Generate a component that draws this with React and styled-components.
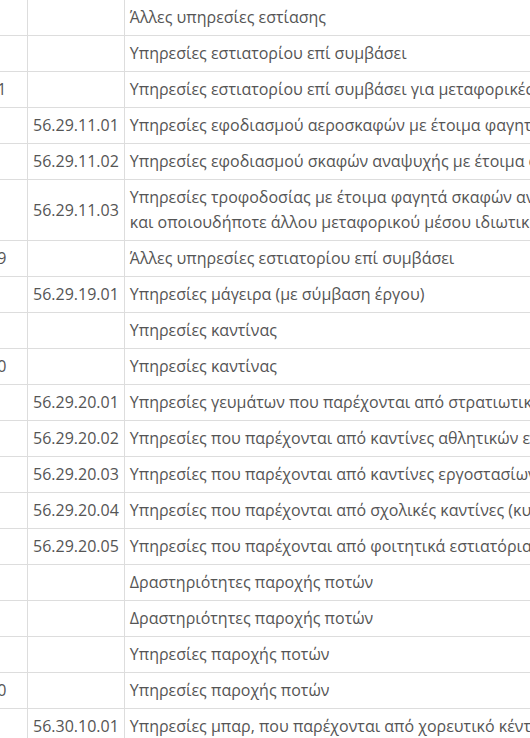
import React from "react";
import styled, { createGlobalStyle } from "styled-components";

const GlobalStyle = createGlobalStyle`
  html, body {
    margin: 0;
    padding: 0;
    background: #fff;
    overflow: hidden;
  }
  body {
    font-family: "Open Sans", "Noto Sans", sans-serif;
  }
`;

// table is scrolled: first column sits partly off-screen to the left
const Viewport = styled.div`
  width: 530px;
  height: 738px;
  overflow: hidden;
`;

const Table = styled.table`
  border-collapse: collapse;
  width: max-content;
  margin-top: -1px;
  margin-left: -63px;
  font-size: 16px;
  line-height: 25px;
  color: #555;
`;

const Cell = styled.td`
  border: 1px solid #ddd;
  padding: 5px;
  vertical-align: middle;
  white-space: pre;
  width: ${(p) => p.$width || "auto"};
`;

const rows = [
  ["56.29", "", "Άλλες υπηρεσίες εστίασης"],
  ["56.29.1", "", "Υπηρεσίες εστιατορίου επί συμβάσει"],
  ["56.29.11", "", "Υπηρεσίες εστιατορίου επί συμβάσει για μεταφορικές επιχειρήσεις"],
  ["", "56.29.11.01", "Υπηρεσίες εφοδιασμού αεροσκαφών με έτοιμα φαγητά"],
  ["", "56.29.11.02", "Υπηρεσίες εφοδιασμού σκαφών αναψυχής με έτοιμα φαγητά"],
  [
    "",
    "56.29.11.03",
    "Υπηρεσίες τροφοδοσίας με έτοιμα φαγητά σκαφών αναψυχής, τρένων\nκαι οποιουδήποτε άλλου μεταφορικού μέσου ιδιωτικής χρήσης",
  ],
  ["56.29.19", "", "Άλλες υπηρεσίες εστιατορίου επί συμβάσει"],
  ["", "56.29.19.01", "Υπηρεσίες μάγειρα (με σύμβαση έργου)"],
  ["56.29.2", "", "Υπηρεσίες καντίνας"],
  ["56.29.20", "", "Υπηρεσίες καντίνας"],
  ["", "56.29.20.01", "Υπηρεσίες γευμάτων που παρέχονται από στρατιωτικές λέσχες"],
  ["", "56.29.20.02", "Υπηρεσίες που παρέχονται από καντίνες αθλητικών εγκαταστάσεων"],
  ["", "56.29.20.03", "Υπηρεσίες που παρέχονται από καντίνες εργοστασίων"],
  ["", "56.29.20.04", "Υπηρεσίες που παρέχονται από σχολικές καντίνες (κυλικεία)"],
  ["", "56.29.20.05", "Υπηρεσίες που παρέχονται από φοιτητικά εστιατόρια"],
  ["56.3", "", "Δραστηριότητες παροχής ποτών"],
  ["56.30", "", "Δραστηριότητες παροχής ποτών"],
  ["56.30.1", "", "Υπηρεσίες παροχής ποτών"],
  ["56.30.10", "", "Υπηρεσίες παροχής ποτών"],
  ["", "56.30.10.01", "Υπηρεσίες μπαρ, που παρέχονται από χορευτικό κέντρο"],
];

const App = () => {
  return (
    <Viewport>
      <GlobalStyle />
      <Table>
        <tbody>
          {rows.map((row, idx) => (
            <tr key={idx}>
              <Cell $width="79px">{row[0]}</Cell>
              <Cell $width="85px">{row[1]}</Cell>
              <Cell>{row[2]}</Cell>
            </tr>
          ))}
        </tbody>
      </Table>
    </Viewport>
  );
};

export default App;
